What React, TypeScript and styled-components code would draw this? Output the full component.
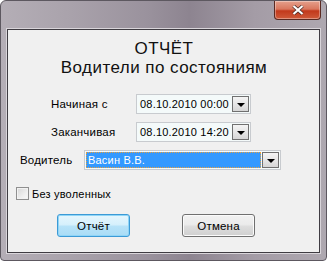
import styled, { createGlobalStyle } from 'styled-components';

const GlobalStyle = createGlobalStyle`
   html, body {
      margin: 0;
      padding: 0;
      background: #ffffff;
   }
   body {
      font-family: 'Liberation Sans', Arial, sans-serif;
   }
`;

const Window = styled.div`
   width: 327px;
   height: 261px;
   box-sizing: border-box;
   display: flex;
   flex-direction: column;
   border: 1px solid #5d5860;
   border-radius: 6px 6px 4px 4px;
   background: linear-gradient(90deg, #b4aeb6 0%, #aaa3ac 20%, #9a929d 45%, #8d8490 58%, #a49ca6 78%, #aea8b0 100%);
   padding: 0 6px 7px 6px;
   overflow: hidden;
`;

const TitleBar = styled.div`
   height: 28px;
   flex: none;
   display: flex;
   justify-content: flex-end;
   align-items: flex-start;
`;

const CloseButton = styled.div`
   width: 45px;
   height: 18px;
   margin-right: -1px;
   display: flex;
   align-items: center;
   justify-content: center;
   border: 1px solid #5a2a22;
   border-top: none;
   border-radius: 0 0 4px 4px;
   background: linear-gradient(180deg, #e5a08c 0%, #d9775e 45%, #c2391c 55%, #cf5a3a 100%);
   box-shadow: inset 0 0 0 1px rgba(255, 255, 255, 0.35);
`;

const Client = styled.div`
   flex: 1;
   display: flex;
   flex-direction: column;
   background: #f0f0f0;
   border: 1px solid #3f3c42;
   box-shadow: 0 0 0 1px #d9d5da;
   font-size: 11px;
   letter-spacing: 0.2px;
   color: #000;
`;

const Heading = styled.div`
   display: flex;
   flex-direction: column;
   align-items: center;
   padding-top: 9px;
   font-size: 17px;
   line-height: 19px;
   letter-spacing: 0.45px;
   margin-left: 1px;
   color: #111;
`;

const Form = styled.div`
   display: flex;
   flex-direction: column;
   padding-top: 17px;
`;

const DateRow = styled.div`
   display: grid;
   grid-template-columns: 85px auto;
   align-items: center;
   padding-left: 43px;
   margin-bottom: 8px;
`;

const DriverRow = styled.div`
   display: grid;
   grid-template-columns: 64px auto;
   align-items: center;
   padding-left: 12px;
   margin-bottom: 17px;
`;

const Label = styled.span`
   font-size: 11.5px;
`;

const Field = styled.div<{ $width: number }>`
   width: ${(p) => p.$width}px;
   height: 20px;
   box-sizing: border-box;
   display: flex;
   align-items: center;
   border: 1px solid #c8cbcf;
   background: #f4fafa;
   padding: 1px;
`;

const FieldText = styled.span`
   flex: 1;
   padding-left: 2px;
   white-space: nowrap;
`;

const Selected = styled.span`
   flex: 1;
   height: 100%;
   box-sizing: border-box;
   display: flex;
   align-items: center;
   padding-left: 2px;
   background: #3399ff;
   color: #fff;
   outline: 1px dotted #e8a040;
   outline-offset: -1px;
   margin-right: 1px;
`;

const DropButton = styled.div`
   width: 17px;
   height: 16px;
   box-sizing: border-box;
   display: flex;
   align-items: center;
   justify-content: center;
   border: 1px solid #707070;
   background: linear-gradient(180deg, #f4f4f4 0%, #e6e6e6 50%, #d6d6d6 100%);
`;

const Arrow = styled.span`
   width: 0;
   height: 0;
   border-left: 4px solid transparent;
   border-right: 4px solid transparent;
   border-top: 4px solid #000;
   margin-top: 1px;
`;

const CheckRow = styled.label`
   display: flex;
   align-items: center;
   gap: 3px;
   padding-left: 8px;
`;

const CheckBox = styled.span`
   width: 13px;
   height: 13px;
   box-sizing: border-box;
   border: 1px solid #8f8f8f;
   background: linear-gradient(135deg, #d6d6d6 0%, #eeeeee 60%, #fafafa 100%);
   box-shadow: inset 0 0 0 1px #f2f2f2;
`;

const Buttons = styled.div`
   display: flex;
   gap: 52px;
   padding-left: 49px;
   padding-top: 14px;
`;

const Button = styled.div<{ $default?: boolean }>`
   width: 73px;
   height: 23px;
   box-sizing: border-box;
   display: flex;
   align-items: center;
   justify-content: center;
   border-radius: 3px;
   font-size: 11.5px;
   border: 1px solid ${(p) => (p.$default ? '#3c9ad6' : '#707070')};
   background: ${(p) =>
      p.$default
         ? 'linear-gradient(180deg, #e6f6fd 0%, #d6f0fc 45%, #b6e2f8 55%, #a9dcf6 100%)'
         : 'linear-gradient(180deg, #f2f2f2 0%, #ebebeb 45%, #dddddd 55%, #cfcfcf 100%)'};
   box-shadow: inset 0 0 0 1px ${(p) => (p.$default ? '#8fd5f7' : '#fbfbfb')};
`;

function Combo({ width, value, selected }: { width: number; value: string; selected?: boolean }) {
   return (
      <Field $width={width}>
         {selected ? <Selected>{value}</Selected> : <FieldText>{value}</FieldText>}
         <DropButton>
            <Arrow />
         </DropButton>
      </Field>
   );
}

export default function App(): JSX.Element {
   return (
      <>
         <GlobalStyle />
         <Window>
            <TitleBar>
               <CloseButton>
                  <svg width="12" height="10" viewBox="0 0 12 10">
                     <path d="M1.5 1 L10.5 9 M10.5 1 L1.5 9" stroke="#4a2b26" strokeWidth="3.6" />
                     <path d="M1.5 1 L10.5 9 M10.5 1 L1.5 9" stroke="#ffffff" strokeWidth="2.2" />
                  </svg>
               </CloseButton>
            </TitleBar>
            <Client>
               <Heading>
                  <span>ОТЧЁТ</span>
                  <span>Водители по состояниям</span>
               </Heading>
               <Form>
                  <DateRow>
                     <Label>Начиная с</Label>
                     <Combo width={115} value="08.10.2010 00:00" />
                  </DateRow>
                  <DateRow>
                     <Label>Заканчивая</Label>
                     <Combo width={115} value="08.10.2010 14:20" />
                  </DateRow>
                  <DriverRow>
                     <Label>Водитель</Label>
                     <Combo width={197} value="Васин В.В." selected />
                  </DriverRow>
                  <CheckRow>
                     <CheckBox />
                     Без уволенных
                  </CheckRow>
                  <Buttons>
                     <Button $default>Отчёт</Button>
                     <Button>Отмена</Button>
                  </Buttons>
               </Form>
            </Client>
         </Window>
      </>
   );
}
